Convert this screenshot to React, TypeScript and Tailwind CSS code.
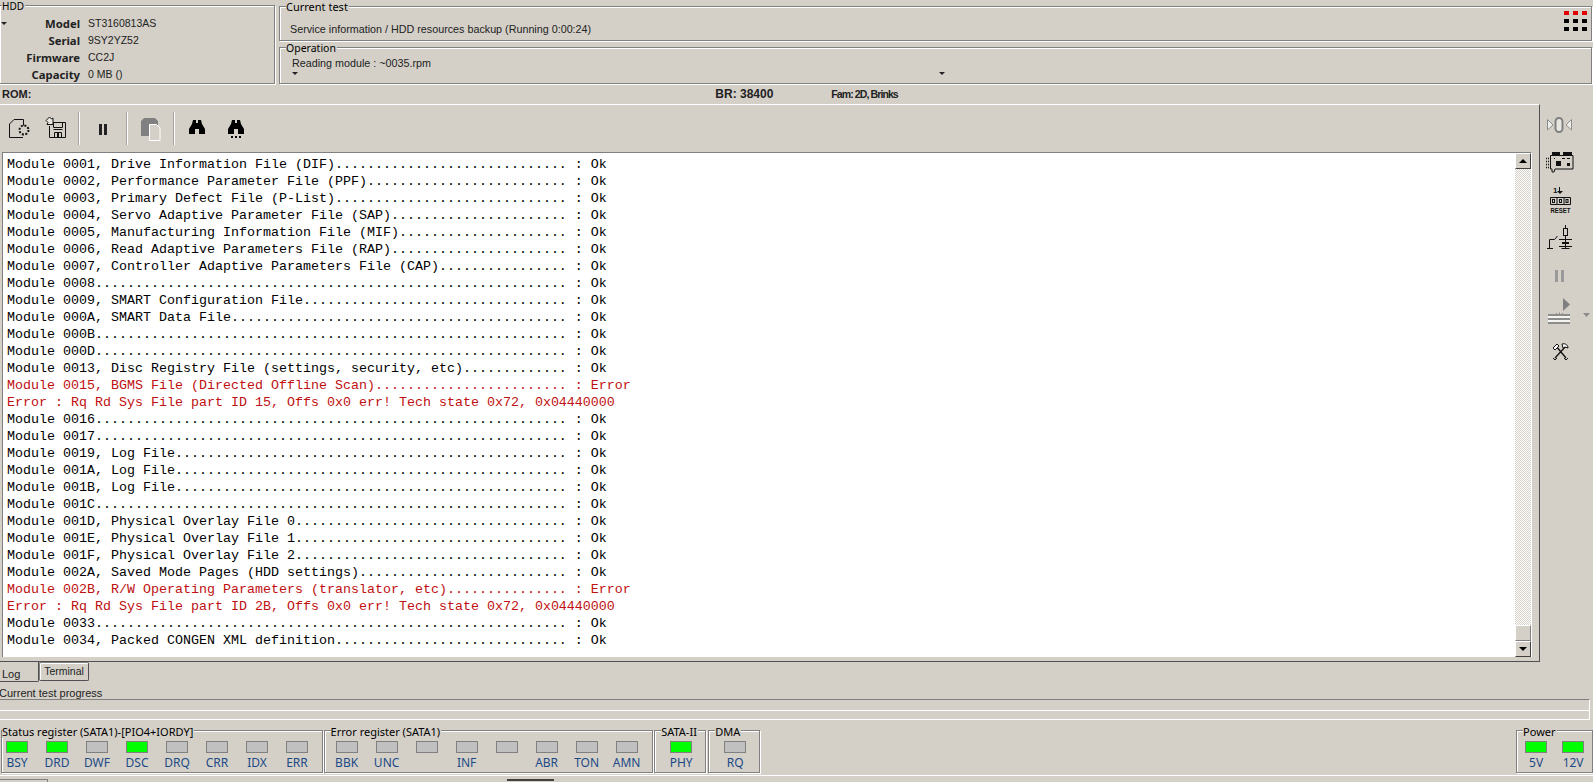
import React from "react";

const ok = (s: string) => ({ t: s.padEnd(70, ".") + " : Ok", red: false });
const bad = (s: string) => ({ t: s.padEnd(70, ".") + " : Error", red: true });
const err = (s: string) => ({ t: s, red: true });

const lines = [
  ok("Module 0001, Drive Information File (DIF)"),
  ok("Module 0002, Performance Parameter File (PPF)"),
  ok("Module 0003, Primary Defect File (P-List)"),
  ok("Module 0004, Servo Adaptive Parameter File (SAP)"),
  ok("Module 0005, Manufacturing Information File (MIF)"),
  ok("Module 0006, Read Adaptive Parameters File (RAP)"),
  ok("Module 0007, Controller Adaptive Parameters File (CAP)"),
  ok("Module 0008"),
  ok("Module 0009, SMART Configuration File"),
  ok("Module 000A, SMART Data File"),
  ok("Module 000B"),
  ok("Module 000D"),
  ok("Module 0013, Disc Registry File (settings, security, etc)"),
  bad("Module 0015, BGMS File (Directed Offline Scan)"),
  err("Error : Rq Rd Sys File part ID 15, Offs 0x0 err! Tech state 0x72, 0x04440000"),
  ok("Module 0016"),
  ok("Module 0017"),
  ok("Module 0019, Log File"),
  ok("Module 001A, Log File"),
  ok("Module 001B, Log File"),
  ok("Module 001C"),
  ok("Module 001D, Physical Overlay File 0"),
  ok("Module 001E, Physical Overlay File 1"),
  ok("Module 001F, Physical Overlay File 2"),
  ok("Module 002A, Saved Mode Pages (HDD settings)"),
  bad("Module 002B, R/W Operating Parameters (translator, etc)"),
  err("Error : Rq Rd Sys File part ID 2B, Offs 0x0 err! Tech state 0x72, 0x04440000"),
  ok("Module 0033"),
  ok("Module 0034, Packed CONGEN XML definition"),
];

const ETCH = "border border-[#808080] shadow-[1px_1px_0_#ffffff,inset_1px_1px_0_#ffffff]";
const LIB = "font-['Liberation_Sans',sans-serif]";

function Legend({ children, left = "left-[0px]", size = "text-[11px]", top = "-top-[6px]" }: { children: React.ReactNode; left?: string; size?: string; top?: string }) {
  return (
    <span className={`absolute ${left} ${size} ${top} bg-[#d4d0c8] pr-[1px] leading-[13px] whitespace-nowrap text-black`}>
      {children}
    </span>
  );
}

function Caret({ className = "" }: { className?: string }) {
  return <span className={`block w-0 h-0 border-x-[3px] border-x-transparent border-t-[3px] border-t-[#222] ${className}`} />;
}

function Led({ label, on }: { label?: string; on?: boolean }) {
  return (
    <div className="w-[22px] flex flex-col items-center">
      <div className={`w-[22px] h-[12px] border border-[#808080] ${on ? "bg-[#00ff00]" : "bg-[#c0c0c0]"}`} />
      <span className="mt-[3px] h-[14px] text-[12px] leading-[14px] text-[#1c4a86] whitespace-nowrap">{label}</span>
    </div>
  );
}

function Row({ k, v }: { k: string; v: string }) {
  return (
    <div className="flex h-[17px] items-center">
      <span className="w-[80px] text-right font-bold text-[11.3px]">{k}</span>
      <span className={`ml-[8px] text-[10.5px] ${LIB}`}>{v}</span>
    </div>
  );
}

function Sep({ ml }: { ml: string }) {
  return <div className={`${ml} mt-[7px] w-[2px] h-[33px] border-l border-[#a8a49c] bg-white`} />;
}

function ScrollBtn({ down }: { down?: boolean }) {
  return (
    <div className="w-[16px] h-[16px] bg-[#d4d0c8] border-t border-l border-t-white border-l-white border-b border-r border-b-[#404040] border-r-[#404040] flex items-center justify-center">
      <span className={`block w-0 h-0 border-x-[4px] border-x-transparent ${down ? "border-t-[4px] border-t-black" : "border-b-[4px] border-b-black"}`} />
    </div>
  );
}

const Binoculars = () => <path d="M4 0h3v3h2V0h3l1 4 3 5v5h-6V9H6v5H0V9l3-5z" fill="#000" />;

export default function App() {
  return (
    <div
      className="w-[1593px] h-[782px] bg-[#d4d0c8] overflow-hidden flex flex-col text-[11.5px] text-[#222] leading-none"
      style={{ fontFamily: '"Noto Sans", "Open Sans", sans-serif' }}
    >
      {/* top */}
      <div className="h-[84px] flex shrink-0">
        <div className={`relative -ml-[1px] mt-[5px] w-[276px] h-[79px] ${ETCH} pt-[9px]`}>
          <Legend left="left-[2px]" size="text-[10px]">HDD</Legend>
          <Caret className="absolute left-[1px] top-[16px]" />
          <Row k="Model" v="ST3160813AS" />
          <Row k="Serial" v="9SY2YZ52" />
          <Row k="Firmware" v="CC2J" />
          <Row k="Capacity" v="0 MB ()" />
        </div>
        <div className="ml-[4px] w-[1313px] flex flex-col pt-[6px]">
          <div className={`relative h-[35px] ${ETCH} flex items-center pl-[10px] pr-[4px] justify-between`}>
            <Legend left="left-[6px]" top="-top-[7px]">Current test</Legend>
            <span className={`mt-[11px] text-[10.75px] ${LIB}`}>Service information / HDD resources backup (Running 0:00:24)</span>
            <div className="grid grid-cols-3 gap-x-[4px] gap-y-[4px] -mt-[5px]">
              {Array.from({ length: 9 }).map((_, i) => (
                <span key={i} className={`block w-[5px] h-[4px] ${i < 3 ? "bg-[#e00000]" : "bg-black"}`} />
              ))}
            </div>
          </div>
          <div className={`relative mt-[6px] h-[37px] ${ETCH} pl-[12px] pt-[8px]`}>
            <Legend left="left-[6px]" size="text-[10.5px]">Operation</Legend>
            <div className={`h-[14px] leading-[14px] text-[10.75px] ${LIB}`}>Reading module : ~0035.rpm</div>
            <div className="flex mt-[2px]">
              <Caret />
              <Caret className="ml-[641px]" />
            </div>
          </div>
        </div>
      </div>

      {/* ROM bar */}
      <div className={`h-[20px] shrink-0 flex items-center font-bold pl-[2px] ${LIB}`}>
        <span className="text-[11px]">ROM:</span>
        <span className="ml-[684px] text-[12px]">BR: 38400</span>
        <span className="ml-[58px] text-[10.5px] tracking-[-0.9px]">Fam: 2D, Brinks</span>
      </div>

      {/* main */}
      <div className="h-[558px] shrink-0 flex">
        <div className="w-[1540px] h-full flex flex-col border-t border-t-white border-r border-r-[#505050] border-b border-b-[#505050]">
          {/* toolbar */}
          <div className="h-[47px] shrink-0 flex items-start">
            <svg className="ml-[8px] mt-[13px] shrink-0" width="23" height="22" viewBox="0 0 23 22" fill="none" stroke="#111" strokeWidth="1">
              <path d="M1.5 6 6 1.500h9.500V8M15 19.500H1.500V6" />
              <circle cx="16" cy="12" r="4.500" fill="#d4d0c8" strokeDasharray="2 1.500" strokeWidth="2" />
              <circle cx="16" cy="12" r="2" fill="#d4d0c8" strokeWidth="0" />
            </svg>
            <svg className="ml-[14px] mt-[11px] shrink-0" width="22" height="23" viewBox="0 0 22 23" fill="none" stroke="#111" strokeWidth="1">
              <path d="M6.500 6.500h14v15h-16V10" />
              <path d="M8.500 13.500h9M8.500 6.500v5h9v-5M9.500 21.500v-5h7v5" />
              <rect x="12" y="17" width="2" height="4" fill="#111" stroke="none" />
              <path d="M1 4.500 4.500 1l2 2 1.500-1v6.500H2L3 6.500z" fill="#e8e6e0" />
            </svg>
            <Sep ml="ml-[11px]" />
            <svg className="ml-[19px] mt-[19px] shrink-0" width="8" height="11" viewBox="0 0 8 11">
              <rect x="0" y="0" width="3" height="11" fill="#222" />
              <rect x="5" y="0" width="3" height="11" fill="#222" />
            </svg>
            <Sep ml="ml-[19px]" />
            <svg className="ml-[12px] mt-[13px] shrink-0" width="22" height="24" viewBox="0 0 22 24">
              <path d="M4 0h11l3 3v15H1V3z" fill="#808080" />
              <path d="M9.500 6.500h7l3.500 3.500v12.500H9.500z" fill="#d4d0c8" stroke="#fff" />
            </svg>
            <Sep ml="ml-[11px]" />
            <svg className="ml-[14px] mt-[15px] shrink-0" width="16" height="14" viewBox="0 0 16 14">
              <Binoculars />
            </svg>
            <svg className="ml-[23px] mt-[15px] shrink-0" width="16" height="19" viewBox="0 0 16 19">
              <Binoculars />
              <rect x="3" y="16" width="2" height="2" fill="#000" />
              <rect x="7" y="16" width="2" height="2" fill="#000" />
              <rect x="11" y="16" width="2" height="2" fill="#000" />
            </svg>
          </div>

          {/* log */}
          <div className="ml-[2px] w-[1530px] h-[505px] shrink-0 flex border-t border-l border-[#808080] border-r border-r-white">
            <div
              className="flex-1 bg-white pl-[4px] pt-[3px] text-[13.333px] overflow-hidden"
              style={{ fontFamily: '"Liberation Mono", monospace' }}
            >
              {lines.map((l, i) => (
                <div key={i} className={`h-[17px] leading-[17px] whitespace-pre ${l.red ? "text-[#c01010]" : "text-black"}`}>
                  {l.t}
                </div>
              ))}
            </div>
            <div className="w-[16px] flex flex-col bg-[repeating-conic-gradient(#ffffff_0_25%,#d4d0c8_0_50%)] bg-[length:2px_2px]">
              <ScrollBtn />
              <div className="flex-1" />
              <div className="w-[16px] h-[16px] bg-[#d4d0c8] border-t border-l border-t-white border-l-white border-b border-r border-b-[#808080] border-r-[#808080]" />
              <ScrollBtn down />
            </div>
          </div>
        </div>

        {/* right sidebar */}
        <div className="flex-1 flex flex-col items-start">
          <svg className="ml-[7px] mt-[13px]" width="26" height="16" viewBox="0 0 26 16" fill="none">
            <path d="M.5 2.500 6 8 .5 13z" stroke="#8c8c8c" fill="#eeeeea" />
            <rect x="8.500" y="1" width="7" height="14" rx="3.500" stroke="#808080" strokeWidth="2" fill="#e8e6e0" />
            <path d="M24.500 2.500 19 8l5.500 5z" stroke="#8c8c8c" fill="#eeeeea" />
          </svg>
          <svg className="ml-[6px] mt-[19px]" width="28" height="21" viewBox="0 0 28 21" fill="none" stroke="#111">
            <path d="M4.500 3.500h22.500v13.500H9l-1 3H6v-3H4.500z" />
            <path d="M6 1.500h8M17 1.500h9" strokeWidth="3" />
            <path d="M0 6.500h4M0 9.500h4M0 12.500h4M0 15.500h4" strokeDasharray="1 1" strokeWidth="1.500" />
            <rect x="10" y="9" width="5" height="5" fill="#111" stroke="none" />
            <rect x="21" y="11" width="3" height="3" fill="#111" stroke="none" />
            <path d="M8 6.500h1M16 6.500h3M21 6.500h3" />
          </svg>
          <svg className="ml-[5px] mt-[12px]" width="31" height="29" viewBox="0 0 31 29" fill="none" stroke="#111">
            <g transform="translate(5 0)">
              <text x="3" y="8" fontSize="8" fontWeight="700" fill="#111" stroke="none" fontFamily="Liberation Sans, sans-serif">1</text>
              <path d="M9.500 2v6" />
              <path d="M7 6h6l-3 3z" fill="#111" stroke="none" />
              <path d="M.5 12.500h20v7H.5zM7 12.500v7M14 12.500v7" />
              <rect x="2.500" y="14.500" width="2" height="3" strokeWidth="1" />
              <rect x="9.500" y="14.500" width="2" height="3" strokeWidth="1" />
              <rect x="16" y="14.500" width="2" height="3" strokeWidth="1" />
              <text x="0.500" y="27.500" textLength="20" lengthAdjust="spacingAndGlyphs" fontSize="7.500" fontWeight="700" fill="#111" stroke="none" fontFamily="Liberation Sans, sans-serif">RESET</text>
            </g>
          </svg>
          <svg className="ml-[7px] mt-[11px]" width="26" height="26" viewBox="0 0 26 26" fill="none" stroke="#111">
            <path d="M0 23.500h6M2.500 23.500v-9h5l3-3.500" />
            <path d="M18.500 0v3" />
            <rect x="16.500" y="3.500" width="4" height="7" />
            <path d="M18.500 10.500v13M12 14.500h13M14.500 23.500h8M12 21.500h13" />
            <path d="M15 18h7" strokeWidth="2" />
          </svg>
          <svg className="ml-[15px] mt-[19px]" width="9" height="12" viewBox="0 0 9 12">
            <rect x="0" y="0" width="3" height="12" fill="#9a9a9a" />
            <rect x="6" y="0" width="3" height="12" fill="#9a9a9a" />
          </svg>
          <svg className="ml-[1px] mt-[15px]" width="52" height="29" viewBox="0 0 52 29">
            <path d="M22 1l7 6.500-7 6.500z" fill="#808080" />
            <path d="M7 17h22v2H7zM7 21h22v2H7zM7 25h22v2H7z" fill="#8c8c8c" />
            <path d="M7 19h22v2H7zM7 23h22v2H7z" fill="#f4f4f0" />
            <path d="M15 16h1v1h-1zM18 15.500h1v2h-1zM21 16h1v1h-1z" fill="#8c8c8c" />
            <path d="M42 16h7l-3.500 4z" fill="#8c8c8c" />
          </svg>
          <svg className="ml-[12px] mt-[17px]" width="17" height="18" viewBox="0 0 17 18" fill="none" stroke="#111" strokeWidth="1.300">
            <path d="M4 3l10 12M14 3 3 15" />
            <path d="M1 5l4-4 2 2-4 4zM10 1c3-1 6 1 6 4l-3-1-2 1z" fill="#fff" strokeWidth="1" />
            <path d="M1 15l2 2 2-2M12 15l2 2 2-2" strokeWidth="1" />
          </svg>
        </div>
      </div>

      {/* tabs */}
      <div className={`h-[20px] shrink-0 flex items-start ${LIB}`}>
        <div className="w-[39px] h-[20px] border-b border-r border-b-[#505050] border-r-[#505050] rounded-br-[2px] pl-[2px] pt-[7px] text-[11px]">Log</div>
        <div className="w-[50px] h-[19px] border border-[#505050] border-t-[#808080] border-l-[#808080] rounded-[2px] shadow-[inset_1px_1px_0_#ffffff] flex items-center justify-center text-[10.5px]">Terminal</div>
      </div>

      {/* progress */}
      <div className={`h-[16px] shrink-0 pt-[5px] -ml-[1px] whitespace-nowrap leading-[13px] text-[11px] ${LIB}`}>Current test progress</div>
      <div className="w-[1590px] h-[21px] mt-[1px] shrink-0 flex flex-col border-t border-t-[#808080] border-r border-r-white border-b border-b-white">
        <div className="h-[11px] border-b border-b-white" />
      </div>

      {/* registers */}
      <div className="flex shrink-0 mt-[10px] h-[43px] items-start">
        <div className={`relative ml-[1px] w-[322px] h-[43px] ${ETCH} pl-[4px] pt-[10px] flex gap-[18px]`}>
          <Legend>Status register (SATA1)-[PIO4+IORDY]</Legend>
          <Led label="BSY" on />
          <Led label="DRD" on />
          <Led label="DWF" />
          <Led label="DSC" on />
          <Led label="DRQ" />
          <Led label="CRR" />
          <Led label="IDX" />
          <Led label="ERR" />
        </div>
        <div className={`relative ml-[1px] w-[330px] h-[43px] ${ETCH} pl-[11px] pt-[10px] flex gap-[18px]`}>
          <Legend left="left-[6px]">Error register (SATA1)</Legend>
          <Led label="BBK" />
          <Led label="UNC" />
          <Led />
          <Led label="INF" />
          <Led />
          <Led label="ABR" />
          <Led label="TON" />
          <Led label="AMN" />
        </div>
        <div className={`relative ml-[1px] w-[52px] h-[43px] ${ETCH} pl-[15px] pt-[10px] flex`}>
          <Legend left="left-[6px]">SATA-II</Legend>
          <Led label="PHY" on />
        </div>
        <div className={`relative ml-[2px] w-[52px] h-[43px] ${ETCH} pl-[15px] pt-[10px] flex`}>
          <Legend left="left-[6px]">DMA</Legend>
          <Led label="RQ" />
        </div>
        <div className={`relative ml-[756px] w-[77px] h-[43px] ${ETCH} pl-[8px] pt-[10px] flex gap-[15px]`}>
          <Legend left="left-[6px]">Power</Legend>
          <Led label="5V" on />
          <Led label="12V" on />
        </div>
      </div>

      {/* status strip */}
      <div className="mt-[2px] h-[1px] shrink-0 bg-white" />
      <div className="flex shrink-0 mt-[3px]">
        <div className="w-[48px] h-[3px] border-t border-r border-[#808080]" />
        <div className="ml-[459px] w-[47px] h-[3px] border-t-2 border-t-[#404040]" />
      </div>
    </div>
  );
}
